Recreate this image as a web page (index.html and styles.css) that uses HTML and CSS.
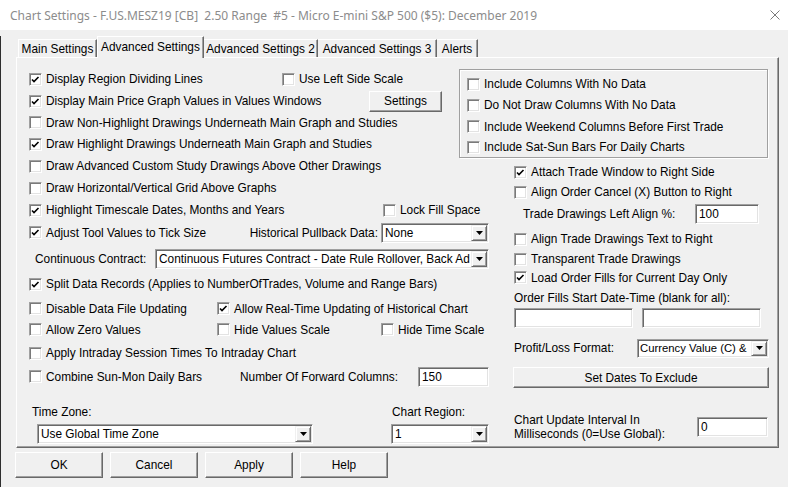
FILE: index.html
```html
<!DOCTYPE html>
<html>
<head>
<meta charset="utf-8">
<link rel="stylesheet" href="styles.css">
</head>
<body>
<div class="titlebar">
  <span class="title">Chart Settings - F.US.MESZ19 [CB]  2.50 Range  #5 - Micro E-mini S&amp;P 500 ($5): December 2019</span>
  <svg class="close" width="10" height="10" viewBox="0 0 10 10"><path d="M0.5 0.5L9.5 9.5M9.5 0.5L0.5 9.5" stroke="#7a7a7a" stroke-width="1" fill="none"/></svg>
</div>
<div class="client">
  <div class="tabs">
    <div class="tab first w79">Main Settings</div>
    <div class="tab sel w107">Advanced Settings</div>
    <div class="tab w114">Advanced Settings 2</div>
    <div class="tab w119">Advanced Settings 3</div>
    <div class="tab w41">Alerts</div>
  </div>
  <div class="panel">
    <div class="colL">
      <div class="row h22">
        <label class="cb w253"><span class="box on"><svg width="11" height="11" viewBox="0 0 11 11"><path d="M2 5.5L4 7.5L8.5 3" fill="none" stroke="#000" stroke-width="1.6"/></svg></span>Display Region Dividing Lines</label>
        <label class="cb"><span class="box"></span>Use Left Side Scale</label>
      </div>
      <div class="row h22">
        <label class="cb w340"><span class="box on"><svg width="11" height="11" viewBox="0 0 11 11"><path d="M2 5.5L4 7.5L8.5 3" fill="none" stroke="#000" stroke-width="1.6"/></svg></span>Display Main Price Graph Values in Values Windows</label>
        <div class="btn w73 bh21">Settings</div>
      </div>
      <div class="row h21">
        <label class="cb"><span class="box"></span>Draw Non-Highlight Drawings Underneath Main Graph and Studies</label>
      </div>
      <div class="row h22">
        <label class="cb"><span class="box on"><svg width="11" height="11" viewBox="0 0 11 11"><path d="M2 5.5L4 7.5L8.5 3" fill="none" stroke="#000" stroke-width="1.6"/></svg></span>Draw Highlight Drawings Underneath Main Graph and Studies</label>
      </div>
      <div class="row h22">
        <label class="cb"><span class="box"></span>Draw Advanced Custom Study Drawings Above Other Drawings</label>
      </div>
      <div class="row h22">
        <label class="cb"><span class="box"></span>Draw Horizontal/Vertical Grid Above Graphs</label>
      </div>
      <div class="row h22">
        <label class="cb w354"><span class="box on"><svg width="11" height="11" viewBox="0 0 11 11"><path d="M2 5.5L4 7.5L8.5 3" fill="none" stroke="#000" stroke-width="1.6"/></svg></span>Highlight Timescale Dates, Months and Years</label>
        <label class="cb"><span class="box"></span>Lock Fill Space</label>
      </div>
      <div class="row h23">
        <label class="cb w207"><span class="box on"><svg width="11" height="11" viewBox="0 0 11 11"><path d="M2 5.5L4 7.5L8.5 3" fill="none" stroke="#000" stroke-width="1.6"/></svg></span>Adjust Tool Values to Tick Size</label>
        <span class="lbl w145 right">Historical Pullback Data:</span>
        <div class="select w108"><span class="val">None</span><span class="arrow"><svg width="7" height="4" viewBox="0 0 7 4"><path d="M0 0H7L3.5 4Z" fill="#000"/></svg></span></div>
      </div>
      <div class="row h22 mt4">
        <span class="lbl ml6 w120">Continuous Contract:</span>
        <div class="select w334"><span class="val">Continuous Futures Contract - Date Rule Rollover, Back Ad</span><span class="arrow"><svg width="7" height="4" viewBox="0 0 7 4"><path d="M0 0H7L3.5 4Z" fill="#000"/></svg></span></div>
      </div>
      <div class="row h22 mt3">
        <label class="cb"><span class="box on"><svg width="11" height="11" viewBox="0 0 11 11"><path d="M2 5.5L4 7.5L8.5 3" fill="none" stroke="#000" stroke-width="1.6"/></svg></span>Split Data Records (Applies to NumberOfTrades, Volume and Range Bars)</label>
      </div>
      <div class="row h21 mt3">
        <label class="cb w188"><span class="box"></span>Disable Data File Updating</label>
        <label class="cb"><span class="box on"><svg width="11" height="11" viewBox="0 0 11 11"><path d="M2 5.5L4 7.5L8.5 3" fill="none" stroke="#000" stroke-width="1.6"/></svg></span>Allow Real-Time Updating of Historical Chart</label>
      </div>
      <div class="row h21">
        <label class="cb w188"><span class="box"></span>Allow Zero Values</label>
        <label class="cb w164"><span class="box"></span>Hide Values Scale</label>
        <label class="cb"><span class="box"></span>Hide Time Scale</label>
      </div>
      <div class="row h22 mt2">
        <label class="cb"><span class="box"></span>Apply Intraday Session Times To Intraday Chart</label>
      </div>
      <div class="row h23 mt1">
        <label class="cb w211"><span class="box"></span>Combine Sun-Mon Daily Bars</label>
        <span class="lbl w178">Number Of Forward Columns:</span>
        <div class="input w71">150</div>
      </div>
      <div class="row h22 mt13">
        <span class="lbl ml3 w360">Time Zone:</span>
        <span class="lbl">Chart Region:</span>
      </div>
      <div class="row h22">
        <div class="select ml8 w276"><span class="val">Use Global Time Zone</span><span class="arrow"><svg width="7" height="4" viewBox="0 0 7 4"><path d="M0 0H7L3.5 4Z" fill="#000"/></svg></span></div>
        <div class="select ml78 w98"><span class="val">1</span><span class="arrow"><svg width="7" height="4" viewBox="0 0 7 4"><path d="M0 0H7L3.5 4Z" fill="#000"/></svg></span></div>
      </div>
    </div>
    <div class="colR">
      <div class="group">
        <div class="row h20"><label class="cb"><span class="box"></span>Include Columns With No Data</label></div>
        <div class="row h22"><label class="cb"><span class="box"></span>Do Not Draw Columns With No Data</label></div>
        <div class="row h21"><label class="cb"><span class="box"></span>Include Weekend Columns Before First Trade</label></div>
        <div class="row h20"><label class="cb"><span class="box"></span>Include Sat-Sun Bars For Daily Charts</label></div>
      </div>
      <div class="row h20 mt4 pl55">
        <label class="cb"><span class="box on"><svg width="11" height="11" viewBox="0 0 11 11"><path d="M2 5.5L4 7.5L8.5 3" fill="none" stroke="#000" stroke-width="1.6"/></svg></span>Attach Trade Window to Right Side</label>
      </div>
      <div class="row h20 pl55">
        <label class="cb"><span class="box"></span>Align Order Cancel (X) Button to Right</label>
      </div>
      <div class="row h22 mt1">
        <span class="lbl ml64 w172">Trade Drawings Left Align %:</span>
        <div class="input w64">100</div>
      </div>
      <div class="row h22 mt3 pl55">
        <label class="cb"><span class="box"></span>Align Trade Drawings Text to Right</label>
      </div>
      <div class="row h18 pl55">
        <label class="cb"><span class="box"></span>Transparent Trade Drawings</label>
      </div>
      <div class="row h19 pl55">
        <label class="cb"><span class="box on"><svg width="11" height="11" viewBox="0 0 11 11"><path d="M2 5.5L4 7.5L8.5 3" fill="none" stroke="#000" stroke-width="1.6"/></svg></span>Load Order Fills for Current Day Only</label>
      </div>
      <div class="row h21 pl55">
        <span class="lbl">Order Fills Start Date-Time (blank for all):</span>
      </div>
      <div class="row h20 pl55 gap9">
        <div class="input w119"></div>
        <div class="input w119"></div>
      </div>
      <div class="row h20 mt10 pl55">
        <span class="lbl w123">Profit/Loss Format:</span>
        <div class="select w132 sh18"><span class="val">Currency Value (C) &amp;</span><span class="arrow"><svg width="7" height="4" viewBox="0 0 7 4"><path d="M0 0H7L3.5 4Z" fill="#000"/></svg></span></div>
      </div>
      <div class="row h21 mt9 pl54">
        <div class="btn w256 bh21">Set Dates To Exclude</div>
      </div>
      <div class="row mt25 pl55">
        <span class="lbl2 w183">Chart Update Interval In<br>Milliseconds (0=Use Global):</span>
        <div class="input w71">0</div>
      </div>
    </div>
  </div>
  <div class="buttons">
    <div class="btn w88">OK</div>
    <div class="btn w88">Cancel</div>
    <div class="btn w88">Apply</div>
    <div class="btn w88">Help</div>
  </div>
</div>
</body>
</html>
```

FILE: styles.css
```css
html, body {
  margin: 0;
  padding: 0;
}
body {
  background: #f0f0f0;
  font-family: "Liberation Sans", Arial, sans-serif;
  font-size: 11.85px;
  color: #000;
  width: 788px;
  height: 487px;
  overflow: hidden;
}
.titlebar {
  height: 30px;
  background: #fff;
  display: flex;
  align-items: center;
  padding: 0 8px 0 10px;
}
.title {
  flex: 1;
  font-family: "Noto Sans", sans-serif;
  font-size: 12px;
  color: #8c8c8c;
  white-space: pre;
}
.close {
  flex: none;
  margin-top: -1px;
}
.client {
  height: 457px;
  box-sizing: border-box;
  border-left: 1px solid #2e2e2e;
}
.tabs {
  display: flex;
  align-items: flex-end;
  height: 21px;
  margin-top: 6px;
  padding-left: 17px;
}
.tab {
  height: 18px;
  box-sizing: border-box;
  display: flex;
  align-items: center;
  justify-content: center;
  white-space: nowrap;
  border-top: 1px solid #fff;
  border-right: 1px solid #696969;
  box-shadow: inset -1px 0 0 #a0a0a0;
  padding-top: 1px;
}
.tab.first {
  border-left: 1px solid #fff;
}
.tab.sel {
  height: 22px;
  margin-bottom: -1px;
  border-left: 1px solid #fff;
  background: #f0f0f0;
  position: relative;
  z-index: 1;
  padding-top: 0;
  padding-bottom: 2px;
}
.panel {
  margin-left: 15px;
  width: 763px;
  height: 391px;
  box-sizing: border-box;
  border: 1px solid;
  border-color: #fff #696969 #696969 #fff;
  box-shadow: inset -1px -1px 0 #a0a0a0;
  display: flex;
}
.colL {
  width: 442px;
  flex: none;
  box-sizing: border-box;
  padding: 10px 0 0 12px;
}
.colR {
  width: 310px;
  flex: none;
  box-sizing: border-box;
  padding-top: 11px;
}
.row {
  display: flex;
  align-items: center;
}
.cb {
  display: flex;
  align-items: center;
  white-space: nowrap;
  flex: none;
}
.box {
  width: 13px;
  height: 13px;
  box-sizing: border-box;
  background: #fff;
  border: 1px solid;
  border-color: #a0a0a0 #fff #fff #a0a0a0;
  box-shadow: inset 1px 1px 0 #7a7a7a, inset -1px -1px 0 #e3e3e3;
  margin-right: 4px;
  flex: none;
  display: flex;
}
.box svg {
  display: block;
}
.lbl {
  white-space: nowrap;
  flex: none;
}
.lbl.right {
  text-align: right;
  box-sizing: border-box;
  padding-right: 3px;
}
.lbl2 {
  line-height: 14px;
  white-space: nowrap;
  flex: none;
}
.select {
  display: flex;
  height: 20px;
  box-sizing: border-box;
  background: #fff;
  border: 1px solid;
  border-color: #a0a0a0 #fff #fff #a0a0a0;
  box-shadow: inset 1px 1px 0 #696969, inset -1px -1px 0 #e3e3e3;
  flex: none;
  padding: 1px;
}
.select .val {
  flex: 1;
  overflow: hidden;
  white-space: nowrap;
  padding-left: 2px;
  line-height: 16px;
}
.select .arrow {
  width: 16px;
  flex: none;
  box-sizing: border-box;
  background: #f0f0f0;
  border: 1px solid;
  border-color: #f0f0f0 #696969 #696969 #f0f0f0;
  box-shadow: inset 1px 1px 0 #fff, inset -1px -1px 0 #a0a0a0;
  display: flex;
  align-items: center;
  justify-content: center;
}
.select.sh18 {
  height: 19px;
}
.select.sh18 .val {
  line-height: 15px;
  font-size: 11.3px;
  padding-left: 1px;
}
.input {
  height: 20px;
  box-sizing: border-box;
  background: #fff;
  border: 1px solid;
  border-color: #a0a0a0 #fff #fff #a0a0a0;
  box-shadow: inset 1px 1px 0 #696969, inset -1px -1px 0 #e3e3e3;
  padding-left: 3px;
  line-height: 18px;
  flex: none;
}
.btn {
  height: 26px;
  box-sizing: border-box;
  background: #f0f0f0;
  border: 1px solid;
  border-color: #fff #696969 #696969 #fff;
  box-shadow: inset -1px -1px 0 #a0a0a0;
  display: flex;
  align-items: center;
  justify-content: center;
  flex: none;
  white-space: nowrap;
}
.btn.bh21 {
  height: 21px;
}
.group {
  width: 309px;
  height: 89px;
  box-sizing: border-box;
  border: 1px solid #a0a0a0;
  box-shadow: inset 1px 1px 0 #fff, 1px 1px 0 #fff;
  padding: 4px 0 0 7px;
}
.buttons {
  display: flex;
  gap: 7px;
  margin-top: 4px;
  padding-left: 14px;
}
.gap9 { gap: 9px; }
.h18 { height: 18px; }
.h19 { height: 19px; }
.h20 { height: 20px; }
.h21 { height: 21px; }
.h22 { height: 22px; }
.h23 { height: 23px; }
.mt1 { margin-top: 1px; }
.mt2 { margin-top: 2px; }
.mt3 { margin-top: 3px; }
.mt4 { margin-top: 4px; }
.mt9 { margin-top: 9px; }
.mt10 { margin-top: 10px; }
.mt12 { margin-top: 12px; }
.mt13 { margin-top: 13px; }
.mt25 { margin-top: 25px; }
.ml3 { margin-left: 3px; }
.ml6 { margin-left: 6px; }
.ml8 { margin-left: 8px; }
.ml64 { margin-left: 64px; }
.ml78 { margin-left: 78px; }
.pl54 { padding-left: 54px; }
.pl55 { padding-left: 55px; }
.w41 { width: 41px; }
.w64 { width: 64px; }
.w71 { width: 71px; }
.w73 { width: 73px; }
.w79 { width: 79px; }
.w88 { width: 88px; }
.w98 { width: 98px; }
.w107 { width: 107px; }
.w108 { width: 108px; }
.w114 { width: 114px; }
.w119 { width: 119px; }
.w120 { width: 120px; }
.w123 { width: 123px; }
.w132 { width: 132px; }
.w145 { width: 145px; }
.w164 { width: 164px; }
.w172 { width: 172px; }
.w178 { width: 178px; }
.w183 { width: 183px; }
.w188 { width: 188px; }
.w207 { width: 207px; }
.w211 { width: 211px; }
.w253 { width: 253px; }
.w256 { width: 256px; }
.w276 { width: 276px; }
.w334 { width: 334px; }
.w340 { width: 340px; }
.w354 { width: 354px; }
.w360 { width: 360px; }
```
